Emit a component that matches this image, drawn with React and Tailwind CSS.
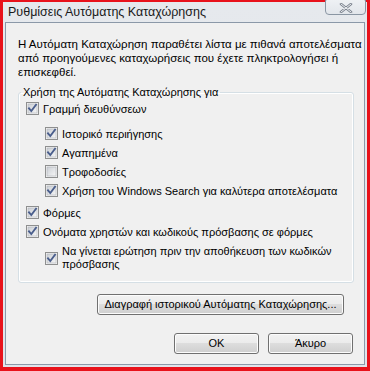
import React from "react";

const font = { fontFamily: '"Liberation Sans", Arial, sans-serif' };

function Check({ checked = true }) {
  return (
    <svg width="13" height="13" viewBox="0 0 13 13" className="shrink-0">
      <defs>
        <linearGradient id="cbg" x1="0" y1="0" x2="1" y2="1">
          <stop offset="0" stopColor="#cbcfd5" />
          <stop offset="1" stopColor="#f6f6f6" />
        </linearGradient>
      </defs>
      <rect x="0.5" y="0.5" width="12" height="12" fill="#f4f4f4" stroke="#8e8f8f" />
      <rect x="2" y="2" width="9" height="9" fill="url(#cbg)" stroke="#aeb3b9" strokeWidth="0.6" />
      {checked && (
        <path d="M3 6.3 L5.3 9 L10 2.8" fill="none" stroke="#4a5e8c" strokeWidth="1.9" strokeLinecap="square" strokeLinejoin="miter" />
      )}
    </svg>
  );
}

function Row({ label, checked = true, indent = false, className = "" }) {
  return (
    <div className={`flex h-[19px] items-center ${indent ? "pl-[26px]" : "pl-[7px]"} ${className}`}>
      <Check checked={checked} />
      <span className="ml-[4px] text-[11px] leading-[14px] text-black whitespace-nowrap">{label}</span>
    </div>
  );
}

function Btn({ children, className = "" }) {
  return (
    <div
      className={`flex h-[21px] items-center justify-center whitespace-nowrap rounded-[3px] border border-[#707070] bg-[linear-gradient(to_bottom,#f2f2f2_0%,#ebebeb_50%,#dddddd_50%,#cfcfcf_100%)] shadow-[inset_0_0_0_1px_#fcfcfc] text-[11px] text-black ${className}`}
    >
      {children}
    </div>
  );
}

export default function App() {
  return (
    <div className="w-[370px] h-[371px] bg-[#e8121b] pt-[2px] pl-[3px] pr-[3px] pb-[4px]" style={font}>
      <div className="flex h-full w-full flex-col bg-[linear-gradient(to_bottom,#e6e9ed,#dfe4ea)]">
        <div className="flex h-[20px] items-start justify-between">
          <div className="pl-[5px] pt-[2px] text-[12.5px] leading-[16px] text-[#1a1a1a]">Ρυθμίσεις Αυτόματης Καταχώρησης</div>
          <div className="-mt-[3px] mr-[1px] flex h-[16px] w-[41px] items-center justify-center rounded-b-[4px] rounded-t-[2px] border border-[#8a96a3] bg-[linear-gradient(to_bottom,#eef1f4,#e2e6eb)]">
            <svg width="14" height="10" viewBox="0 0 14 10" className="mt-[2px]">
              <path d="M2 1 L12 9 M12 1 L2 9" stroke="#7d8590" strokeWidth="2.6" strokeLinecap="round" />
              <path d="M2 1 L12 9 M12 1 L2 9" stroke="#eef0f3" strokeWidth="1" strokeLinecap="round" />
            </svg>
          </div>
        </div>
        <div className="mx-[2px] flex flex-1 flex-col border border-[#8b98a8] bg-[#f0f0f0] mb-[2px]">
          <p className="pl-[12px] pr-0 pt-[14px] text-[11.5px] leading-[14px] text-black">
            Η Αυτόματη Καταχώρηση παραθέτει λίστα με πιθανά αποτελέσματα
            <br />
            από προηγούμενες καταχωρήσεις που έχετε πληκτρολογήσει ή
            <br />
            επισκεφθεί.
          </p>
          <fieldset className="ml-[12px] mt-[6px] w-[336px] rounded-[3px] border border-[#d5dfe5] shadow-[inset_0_0_0_1px_#ffffff] pb-[11px]">
            <legend className="ml-[2px] px-[2px] text-[11px] leading-[14px] text-black">Χρήση της Αυτόματης Καταχώρησης για</legend>
            <Row label="Γραμμή διευθύνσεων" />
            <Row label="Ιστορικό περιήγησης" indent className="mt-[6px]" />
            <Row label="Αγαπημένα" indent />
            <Row label="Τροφοδοσίες" indent checked={false} />
            <Row label="Χρήση του Windows Search για καλύτερα αποτελέσματα" indent />
            <Row label="Φόρμες" className="mt-[3px]" />
            <Row label="Ονόματα χρηστών και κωδικούς πρόσβασης σε φόρμες" />
            <div className="mt-[4px] flex items-center pl-[26px]">
              <Check />
              <span className="ml-[4px] text-[11px] leading-[13px] text-black">
                Να γίνεται ερώτηση πριν την αποθήκευση των κωδικών
                <br />
                πρόσβασης
              </span>
            </div>
          </fieldset>
          <div className="mt-[11px] flex justify-end pr-[20px]">
            <Btn className="w-[247px]">Διαγραφή ιστορικού Αυτόματης Καταχώρησης...</Btn>
          </div>
          <div className="mt-[18px] flex justify-end gap-[9px] pr-[11px]">
            <Btn className="w-[85px]">OK</Btn>
            <Btn className="w-[85px]">Άκυρο</Btn>
          </div>
        </div>
      </div>
    </div>
  );
}
